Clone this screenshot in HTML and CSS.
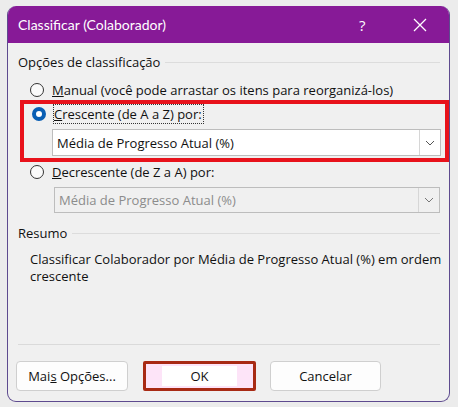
FILE: index.html
```html
<!DOCTYPE html>
<html lang="pt">
<head>
    <meta charset="UTF-8">
    <title>Classificar</title>
    <link rel="stylesheet" href="styles.css">
</head>
<body>
<div class="dialog">
    <div class="titlebar">
        <span class="title">Classificar (Colaborador)</span>
        <span class="help">?</span>
        <span class="close">
            <svg width="14" height="14" viewBox="0 0 14 14"><path d="M1 1 L13 13 M13 1 L1 13" stroke="#fff" stroke-width="1.3" fill="none"/></svg>
        </span>
    </div>
    <div class="content">
        <div class="group-title"><span>Opções de classificação</span><i></i></div>
        <div class="option">
            <span class="radio"></span>
            <span class="label"><u>M</u>anual (você pode arrastar os itens para reorganizá-los)</span>
        </div>
        <div class="highlight">
            <div class="option">
                <span class="radio checked"></span>
                <span class="label focus"><u>C</u>rescente (de A a Z) por:</span>
            </div>
            <div class="select">
                <span class="value">Média de Progresso Atual (%)</span>
                <span class="arrow"><svg width="10" height="6" viewBox="0 0 10 6"><path d="M1 1 L5 5 L9 1" stroke="#555" stroke-width="1" fill="none"/></svg></span>
            </div>
        </div>
        <div class="option">
            <span class="radio"></span>
            <span class="label"><u>D</u>ecrescente (de Z a A) por:</span>
        </div>
        <div class="select disabled">
            <span class="value">Média de Progresso Atual (%)</span>
            <span class="arrow"><svg width="10" height="6" viewBox="0 0 10 6"><path d="M1 1 L5 5 L9 1" stroke="#777" stroke-width="1" fill="none"/></svg></span>
        </div>
        <div class="group-title resumo"><span>Resumo</span><i></i></div>
        <p class="summary">Classificar Colaborador por Média de Progresso Atual (%) em ordem crescente</p>
    </div>
    <div class="footer">
        <button class="btn">Mai<u>s</u> Opções...</button>
        <button class="btn ok"><span>OK</span></button>
        <button class="btn cancel">Cancelar</button>
    </div>
</div>
</body>
</html>
```

FILE: styles.css
```css
* {
    margin: 0;
    padding: 0;
    box-sizing: border-box;
}

body {
    width: 458px;
    height: 407px;
    overflow: hidden;
    background: #ececec;
    font-family: "Open Sans", "Noto Sans", sans-serif;
    font-size: 13px;
    color: #111;
    padding: 6px 0 0 7px;
}

.dialog {
    width: 443px;
    height: 396px;
    background: #f0f0f0;
    border: 1px solid #5e4b8f;
    border-top: none;
    border-radius: 9px;
    overflow: hidden;
    display: flex;
    flex-direction: column;
}

.titlebar {
    height: 37px;
    background: #871a97;
    color: #fff;
    display: flex;
    align-items: center;
    padding-left: 10px;
    flex-shrink: 0;
}

.title {
    flex: 1;
    font-family: Lato, "Open Sans", sans-serif;
    font-size: 14px;
}

.help {
    font-size: 15px;
    width: 30px;
    margin-right: 24px;
}

.close {
    width: 36px;
    display: flex;
    align-items: center;
}

.content {
    flex: 1;
    padding: 9px 9px 0 10px;
}

.group-title {
    display: flex;
    align-items: center;
    height: 20px;
}

.group-title i {
    flex: 1;
    height: 1px;
    background: #dcdcdc;
    margin-left: 5px;
}

.option {
    display: flex;
    align-items: center;
    height: 20px;
    padding-left: 12px;
}

.content > .option:nth-child(2) {
    margin-top: 8px;
}

.radio {
    width: 14px;
    height: 14px;
    border: 1px solid #333;
    border-radius: 50%;
    background: #fafafa;
    margin-right: 8px;
    flex-shrink: 0;
}

.radio.checked {
    border: 4px solid #0a5fb4;
    background: #fff;
}

.label u {
    text-decoration: underline;
}

.label.focus {
    outline: 1px dotted #333;
    outline-offset: 0;
    padding: 0 1px 0 0;
}

.highlight {
    margin: 0 -9px 0 2px;
    border: 4px solid #e8121b;
    padding: 0 4px 2px 6px;
    height: 62px;
}

.highlight .option {
    padding-left: 2px;
}

.select {
    height: 27px;
    background: #fff;
    border: 1px solid #bdbdbd;
    display: flex;
    align-items: center;
}

.highlight .select {
    margin-left: 22px;
    margin-top: 5px;
}

.content > .select {
    margin-left: 36px;
    margin-top: 5px;
    height: 26px;
}

.select .value {
    flex: 1;
    padding-left: 4px;
    font-size: 13px;
}

.select .arrow {
    width: 21px;
    height: 100%;
    border-left: 1px solid #d6d6d6;
    display: flex;
    align-items: center;
    justify-content: center;
}

.select.disabled {
    background: #f0f0f0;
    color: #8c8c8c;
}

.resumo {
    margin-top: 10px;
}

.summary {
    padding: 8px 0 0 12px;
    line-height: 17px;
    width: 440px;
}

.footer {
    height: 57px;
    margin: 0 9px 0 10px;
    border-top: 1px solid #dadada;
    display: flex;
    align-items: flex-start;
    padding-top: 16px;
    gap: 14px;
    flex-shrink: 0;
}

.btn {
    width: 112px;
    height: 30px;
    background: #fdfdfd;
    border: 1px solid #cfcfcf;
    border-radius: 4px;
    font-family: inherit;
    font-size: 13px;
    color: #111;
}

.btn:first-child {
    margin-left: -2px;
}

.btn.ok {
    width: 113px;
    margin-left: 1px;
    border: 3px solid #a82a14;
    border-radius: 2px;
    background: #fde4f8;
    padding: 2px 16px;
}

.btn.ok span {
    display: block;
    background: #fff;
    height: 100%;
    line-height: 20px;
}

.btn.cancel {
    width: 111px;
}
```
